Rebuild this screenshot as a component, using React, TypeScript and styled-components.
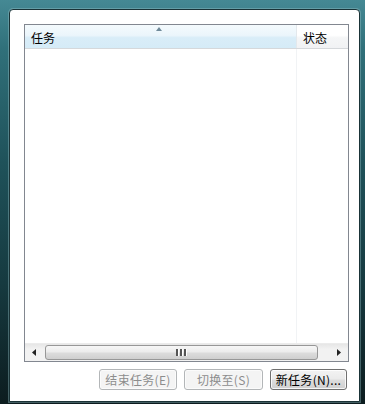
import React from 'react';
import styled, { createGlobalStyle } from 'styled-components';

const Global = createGlobalStyle`
  html, body {
    margin: 0;
    padding: 0;
    background: #0d1f22;
  }
  body {
    font-family: "Noto Sans CJK SC", "Noto Sans", sans-serif;
  }
`;

const Frame = styled.div`
  width: 365px;
  height: 404px;
  box-sizing: border-box;
  padding: 9px 5px 2px 9px;
  background: linear-gradient(to bottom, #458994 0%, #30707a 12%, #1f525a 40%, #163a40 70%, #0c1c1f 100%);
  display: flex;
`;

const Panel = styled.div`
  flex: 1;
  display: flex;
  flex-direction: column;
  background: #fff;
  border: 1px solid #1a3337;
  border-radius: 4px 4px 0 0;
  box-shadow: 0 0 0 1px rgba(150, 195, 200, 0.4);
  padding: 14px 10px 0 14px;
`;

const ListBox = styled.div`
  height: 338px;
  box-sizing: border-box;
  border: 1px solid #828790;
  display: flex;
  flex-direction: column;
`;

const Header = styled.div`
  display: flex;
  height: 23px;
  border-bottom: 1px solid #d5d8db;
`;

const HeaderCell = styled.div<{ $sorted?: boolean; $width?: number }>`
  position: relative;
  ${p => (p.$width ? `width: ${p.$width}px;` : 'flex: 1;')}
  display: flex;
  align-items: center;
  padding: 2px 0 0 6px;
  box-sizing: border-box;
  font-size: 12px;
  color: #000;
  background: ${p =>
    p.$sorted
      ? 'linear-gradient(to bottom, #f4fafd 0%, #ebf5fb 45%, #d9edf8 55%, #d5ebf7 100%)'
      : 'linear-gradient(to bottom, #ffffff 0%, #ffffff 45%, #f5f6f7 55%, #f1f2f4 100%)'};
  border-right: ${p => (p.$sorted ? '1px solid #e3e8ec' : 'none')};
`;

const SortArrow = styled.span`
  position: absolute;
  top: 2px;
  left: 131px;
  width: 0;
  height: 0;
  border-left: 3px solid transparent;
  border-right: 3px solid transparent;
  border-bottom: 4px solid #6f8a9a;
`;

const Body = styled.div`
  flex: 1;
  display: flex;
`;

const Column = styled.div<{ $width?: number }>`
  ${p => (p.$width ? `width: ${p.$width}px;` : 'flex: 1;')}
  border-right: ${p => (p.$width ? '1px solid #f1f3f5' : 'none')};
  box-sizing: border-box;
`;

const ScrollBar = styled.div`
  height: 17px;
  display: flex;
  align-items: stretch;
  background: linear-gradient(to bottom, #e6e6e6 0%, #f2f2f2 30%, #f2f2f2 100%);
  border-top: 1px solid #ebebeb;
`;

const ArrowBtn = styled.div`
  width: 18px;
  display: flex;
  align-items: center;
  justify-content: center;
`;

const Track = styled.div`
  flex: 1;
  display: flex;
  padding: 1px 12px 1px 2px;
`;

const Thumb = styled.div`
  flex: 1;
  border: 1px solid #979797;
  border-radius: 3px;
  background: linear-gradient(to bottom, #f7f7f7 0%, #ececec 45%, #dcdcdc 55%, #cfcfcf 100%);
  display: flex;
  align-items: center;
  justify-content: center;
`;

const Grip = styled.div`
  display: flex;
  gap: 1px;
  span {
    width: 2px;
    height: 7px;
    background: #555;
    border-right: 1px solid #fff;
  }
`;

const ButtonRow = styled.div`
  display: flex;
  justify-content: flex-end;
  gap: 7px;
  margin-top: 7px;
  padding-right: 2px;
`;

const Button = styled.button<{ $w: number; $active?: boolean }>`
  width: ${p => p.$w}px;
  height: 21px;
  padding: 0;
  box-sizing: border-box;
  font-family: "Noto Sans CJK SC", "Noto Sans", sans-serif;
  font-size: 12px;
  line-height: 1;
  border-radius: 3px;
  letter-spacing: 0.3px;
  color: ${p => (p.$active ? '#000' : '#8d8d8d')};
  border: 1px solid ${p => (p.$active ? '#707070' : '#b3b6b8')};
  background: ${p =>
    p.$active
      ? 'linear-gradient(to bottom, #f3f3f3 0%, #ebebeb 45%, #dddddd 55%, #cfcfcf 100%)'
      : '#f4f4f4'};
  box-shadow: inset 0 0 0 1px ${p => (p.$active ? 'rgba(255,255,255,0.8)' : '#fbfbfb')};
`;

export default function App() {
  return (
    <>
      <Global />
      <Frame>
        <Panel>
          <ListBox>
            <Header>
              <HeaderCell $sorted $width={272}>
                <SortArrow />
                任务
              </HeaderCell>
              <HeaderCell>状态</HeaderCell>
            </Header>
            <Body>
              <Column $width={272} />
              <Column />
            </Body>
            <ScrollBar>
              <ArrowBtn>
                <svg width="4" height="7" viewBox="0 0 4 7">
                  <path d="M4 0 L0 3.5 L4 7 Z" fill="#222" />
                </svg>
              </ArrowBtn>
              <Track>
                <Thumb>
                  <Grip>
                    <span />
                    <span />
                    <span />
                  </Grip>
                </Thumb>
              </Track>
              <ArrowBtn>
                <svg width="4" height="7" viewBox="0 0 4 7">
                  <path d="M0 0 L4 3.5 L0 7 Z" fill="#222" />
                </svg>
              </ArrowBtn>
            </ScrollBar>
          </ListBox>
          <ButtonRow>
            <Button $w={78} disabled>结束任务(E)</Button>
            <Button $w={79} disabled>切换至(S)</Button>
            <Button $w={77} $active>新任务(N)...</Button>
          </ButtonRow>
        </Panel>
      </Frame>
    </>
  );
}
